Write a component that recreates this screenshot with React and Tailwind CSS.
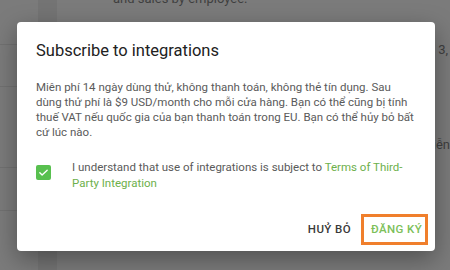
import React from "react";

export default function App() {
  return (
    <div className="relative w-[450px] h-[270px] overflow-hidden bg-[#7b7b7b]" style={{ fontFamily: "Roboto, 'Noto Sans', sans-serif" }}>
      {/* underlying page (dimmed) */}
      <div className="flex h-full">
        <div className="w-[38px] flex flex-col">
          <div className="h-[45px] border-b border-[#717171]"></div>
          <div className="h-[42px] border-b border-[#717171]"></div>
          <div className="h-[81px] border-b border-[#717171]"></div>
          <div className="h-[43px] border-b border-[#717171]"></div>
        </div>
        <div className="w-[19px] bg-[#747474]"></div>
        <div className="flex-1 relative">
          <div className="absolute left-[56px] top-[-11px] text-[13px] text-[#3f3f3f]">and sales by employee.</div>
          <div className="absolute right-[2px] top-[40px] text-[13px] text-[#3f3f3f]">3,</div>
          <div className="absolute right-[0px] top-[135px] text-[13px] text-[#3f3f3f]">iễn</div>
        </div>
      </div>

      {/* dialog */}
      <div className="absolute left-[17px] top-[22px] w-[418px] h-[229px] bg-white rounded-[4px] shadow-[0_8px_24px_rgba(0,0,0,0.35)] flex flex-col">
        <div className="pl-[19px] pr-[18px] pt-[18px]">
          <h2 className="text-[16.5px] leading-[22px] text-[#212121] font-normal">Subscribe to integrations</h2>
          <p className="mt-[18px] text-[11.5px] leading-[15px] text-[#5a5a5a]">
            Miên phí 14 ngày dùng thử, không thanh toán, không thẻ tín dụng. Sau dùng thử phí là $9 USD/month cho mỗi cửa hàng. Bạn có thể cũng bị tính thuế VAT nếu quốc gia của bạn thanh toán trong EU. Bạn có thể hủy bỏ bất cứ lúc nào.
          </p>
          <div className="mt-[19px] flex items-start">
            <div className="mt-[6px] w-[15px] h-[15px] rounded-[2px] bg-[#58c04f] flex items-center justify-center shrink-0">
              <svg width="11" height="11" viewBox="0 0 24 24" fill="none" stroke="white" strokeWidth="3" strokeLinecap="round" strokeLinejoin="round">
                <path d="M4 12.5l5 5L20 7" />
              </svg>
            </div>
            <p className="ml-[21px] text-[11.5px] leading-[16px] text-[#5a5a5a] w-[340px]">
              I understand that use of integrations is subject to <span className="text-[#6db04b]">Terms of Third-Party Integration</span>
            </p>
          </div>
        </div>
        <div className="mt-auto flex justify-end items-center pr-[7px] pb-[6px] gap-[10px]">
          <button className="text-[11.5px] font-medium tracking-[0.4px] text-[#3a3a3a] h-[31px]">HUỶ BỎ</button>
          <button className="text-[11.5px] font-medium tracking-[0.4px] text-[#7cc05a] border-[3px] border-[#f07f2c] w-[67px] h-[31px] pl-[4px]">ĐĂNG KÝ</button>
        </div>
      </div>
    </div>
  );
}
